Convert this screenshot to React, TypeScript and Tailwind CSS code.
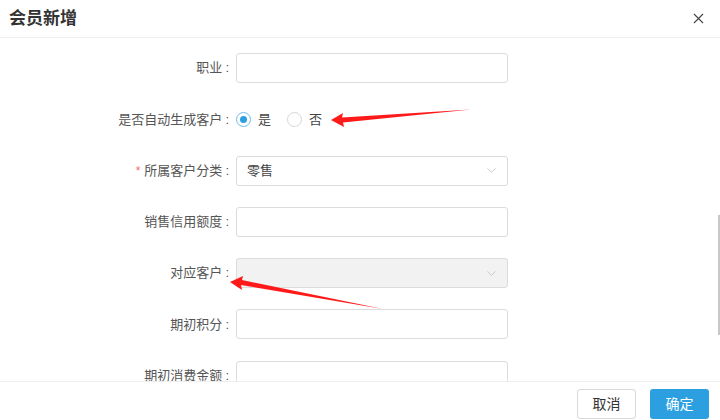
import { ChevronDown, X } from "lucide-react";

const FONT = { fontFamily: '"Liberation Sans", "Noto Sans CJK SC", sans-serif' };

function Label({ text, required }: { text: string; required?: boolean }) {
  return (
    <div className="flex w-[231px] shrink-0 items-center justify-end pr-[2px] text-[13px] text-[#555]">
      {required && <span className="mr-[4px] text-[12px] text-[#f56c6c]">*</span>}
      <span>{text}</span>
      <span className="ml-[3px]">:</span>
    </div>
  );
}

function TextInput() {
  return <div className="ml-[5px] h-[30px] w-[272px] rounded-[3px] border border-[#dcdcdc] bg-white" />;
}

function Select({ value, disabled }: { value?: string; disabled?: boolean }) {
  return (
    <div
      className={`ml-[5px] flex h-[30px] w-[272px] items-center justify-between rounded-[3px] border border-[#dcdcdc] pl-[10px] pr-[8px] text-[13px] text-[#444] ${
        disabled ? "bg-[#f2f2f2]" : "bg-white"
      }`}
    >
      <span>{value}</span>
      <ChevronDown className="h-[15px] w-[15px] text-[#c0c0c0]" strokeWidth={1.3} />
    </div>
  );
}

function Radio({ checked, label }: { checked?: boolean; label: string }) {
  return (
    <div className="flex items-center">
      <span
        className={`flex h-[15px] w-[15px] items-center justify-center rounded-full border ${
          checked ? "border-[#6fbde9]" : "border-[#d6d6d6]"
        }`}
      >
        {checked && <span className="h-[7px] w-[7px] rounded-full bg-[#2b9fe0]" />}
      </span>
      <span className="ml-[7px] text-[13px] text-[#444]">{label}</span>
    </div>
  );
}

function Row({ children }: { children: React.ReactNode }) {
  return <div className="flex h-[30px] shrink-0 items-center">{children}</div>;
}

export default function App() {
  return (
    <div className="relative flex h-[420px] w-[720px] flex-col overflow-hidden bg-white" style={FONT}>
      {/* Header */}
      <div className="flex h-[38px] shrink-0 items-center justify-between border-b border-[#eeeeee] pl-[9px] pr-[13px]">
        <h2 className="text-[17px] font-bold text-[#333]">会员新增</h2>
        <X className="h-[17px] w-[17px] text-[#444]" strokeWidth={1.6} />
      </div>

      {/* Body */}
      <div className="flex min-h-0 flex-1 flex-col gap-[21.3px] overflow-hidden pt-[15px]">
        <Row>
          <Label text="职业" />
          <TextInput />
        </Row>
        <Row>
          <Label text="是否自动生成客户" />
          <div className="ml-[5px] flex items-center gap-[16px]">
            <Radio checked label="是" />
            <Radio label="否" />
          </div>
        </Row>
        <Row>
          <Label text="所属客户分类" required />
          <Select value="零售" />
        </Row>
        <Row>
          <Label text="销售信用额度" />
          <TextInput />
        </Row>
        <Row>
          <Label text="对应客户" />
          <Select disabled />
        </Row>
        <Row>
          <Label text="期初积分" />
          <TextInput />
        </Row>
        <Row>
          <Label text="期初消费金额" />
          <TextInput />
        </Row>
      </div>

      {/* Footer */}
      <div className="flex h-[39px] shrink-0 items-start justify-end gap-[14px] border-t border-[#eeeeee] pr-[11px] pt-[7px]">
        <button className="h-[30px] w-[59px] rounded-[3px] border border-[#d9d9d9] bg-white text-[14px] text-[#333]">
          取消
        </button>
        <button className="h-[30px] w-[59px] rounded-[3px] bg-[#2b9fe0] text-[14px] text-white">确定</button>
      </div>

      {/* Scrollbar */}
      <div className="absolute right-0 top-[215px] h-[120px] w-[2px] bg-[#c8c8c8]" />

      {/* Annotation arrows */}
      <svg className="pointer-events-none absolute left-0 top-0" width="720" height="420">
        <polygon points="331,120 343,113 342,117.5 471,109.5 343,122.5 344,127" fill="#ff1a1a" />
        <polygon points="230,282 243,276 242,280 383,309 241,285 242,290" fill="#ff1a1a" />
      </svg>
    </div>
  );
}
